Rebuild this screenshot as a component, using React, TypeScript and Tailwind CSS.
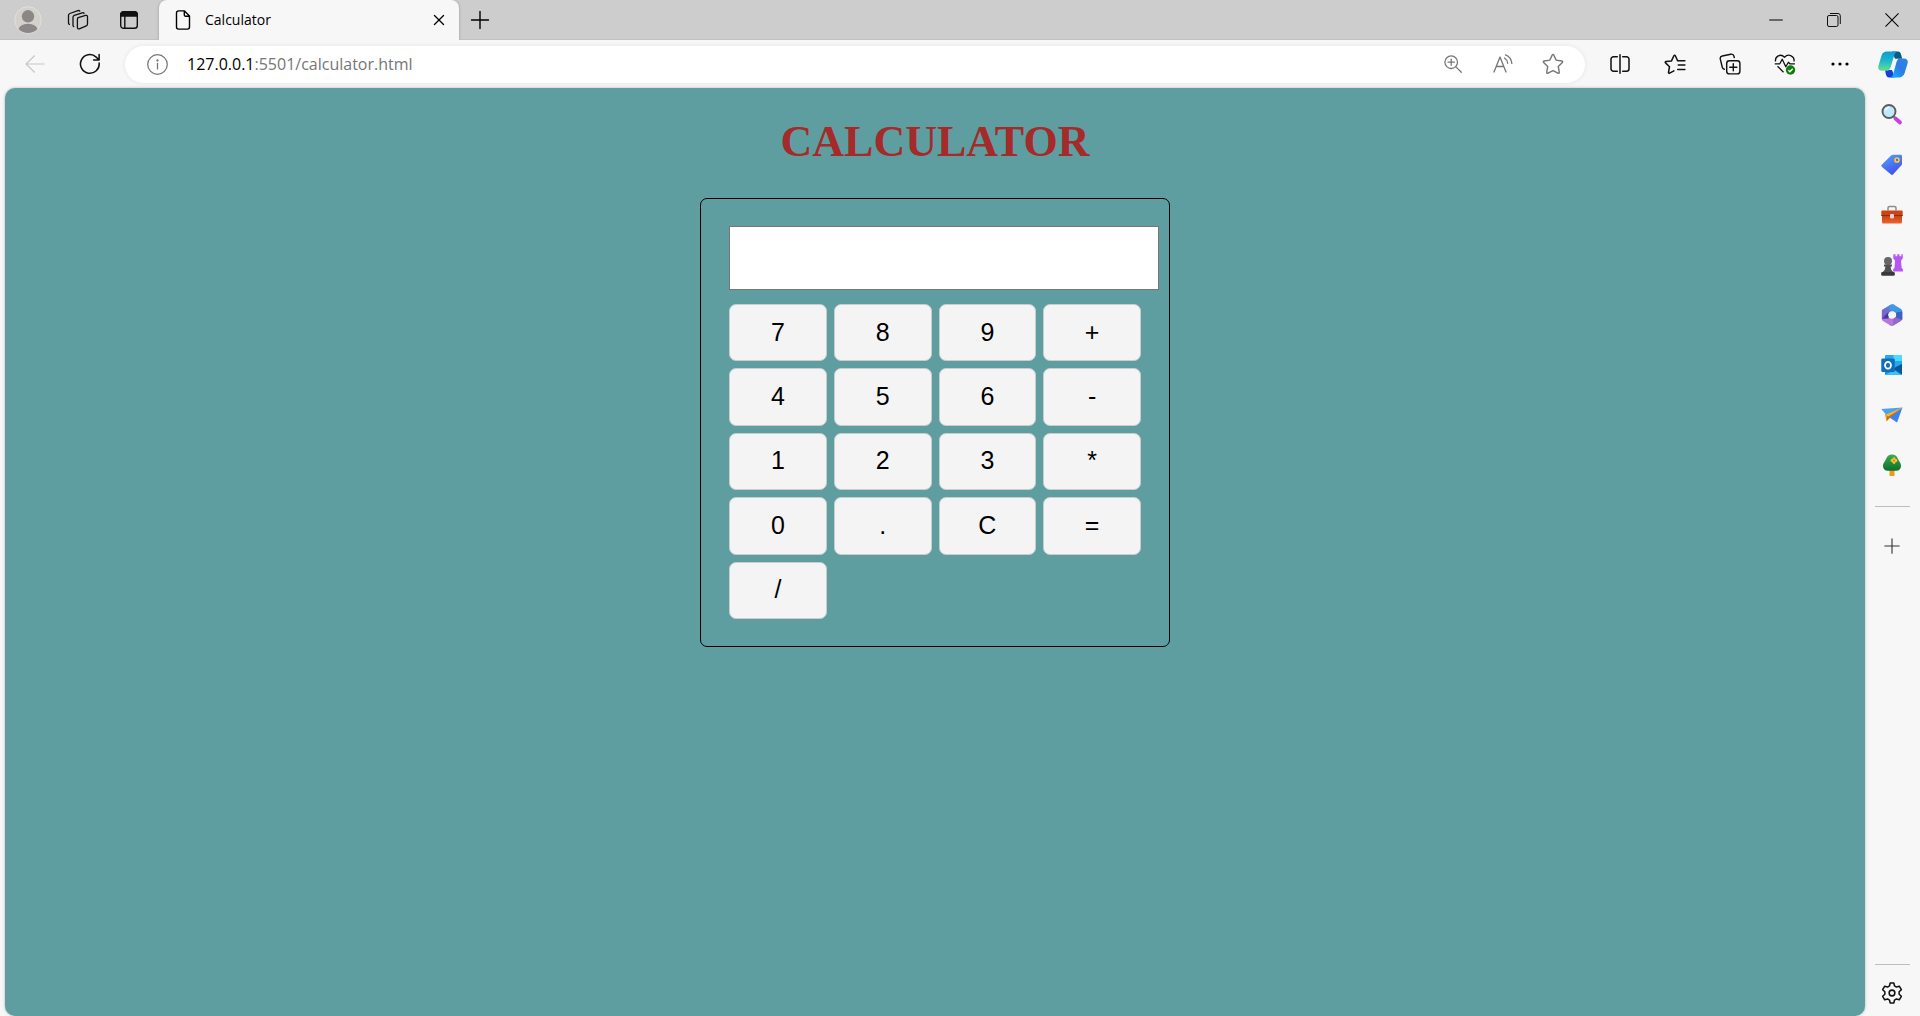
import { useState } from "react";
import type { ReactNode } from "react";

const keys = ["7", "8", "9", "+", "4", "5", "6", "-", "1", "2", "3", "*", "0", ".", "C", "=", "/"];

type IconProps = { children: ReactNode; className?: string; width?: string };

function Icon({ children, className = "size-5", width = "1.2" }: IconProps) {
  return (
    <svg
      viewBox="0 0 20 20"
      fill="none"
      stroke="currentColor"
      strokeWidth={width}
      strokeLinecap="round"
      strokeLinejoin="round"
      className={className}
      aria-hidden="true"
    >
      {children}
    </svg>
  );
}

type SlotProps = { label: string; className: string; children: ReactNode };

function Slot({ label, className, children }: SlotProps) {
  return (
    <button type="button" aria-label={label} className={`flex shrink-0 items-center justify-center ${className}`}>
      {children}
    </button>
  );
}

function TabStrip() {
  return (
    <header className="flex h-10 bg-[#cdcdcd] pl-0.5 text-black shadow-[inset_0_-1px_0_#c2c2c2]">
      <Slot label="Profile" className="w-[51px]">
        <svg viewBox="0 0 28 28" className="size-7" aria-hidden="true">
          <defs>
            <clipPath id="avatar">
              <circle cx="14" cy="14" r="13" />
            </clipPath>
          </defs>
          <circle cx="14" cy="14" r="13.3" fill="#d4d1cd" stroke="#e1dfdd" />
          <g clipPath="url(#avatar)" fill="#8a8886">
            <circle cx="14" cy="10.3" r="6.2" />
            <ellipse cx="14" cy="25" rx="10" ry="7.3" />
          </g>
        </svg>
      </Slot>
      <Slot label="Workspaces" className="w-[50px]">
        <svg viewBox="0 0 22 22" className="size-[22px]" fill="none" stroke="#111" strokeWidth="1.3" strokeLinecap="round" strokeLinejoin="round" aria-hidden="true">
          <path d="M11.200 8.600l7.400-2.200c1-.3 1.900.3 1.900 1.300v7.400c0 .8-.5 1.500-1.200 1.800l-7 2.900c-1 .4-1.900-.2-1.900-1.200v-8.300c0-.8.2-1.400.8-1.700z" />
          <path d="M6.800 17.600c-.5-.2-.8-.7-.8-1.300V8.200c0-.9.5-1.500 1.300-1.800l8-2.600c.8-.2 1.500 0 1.800.5" />
          <path d="M2.400 15.400c-.5-.2-.9-.7-.9-1.400V6.300c0-.9.5-1.500 1.300-1.800l8.100-2.900c.8-.2 1.500 0 1.900.5" />
        </svg>
      </Slot>
      <Slot label="Tab actions menu" className="w-[52px]">
        <svg viewBox="0 0 20 20" className="size-5" fill="none" stroke="#111" strokeWidth="1.4" aria-hidden="true">
          <rect x="1.7" y="2" width="16.6" height="16.3" rx="2.8" />
          <path d="M1.700 6V4.500A2.800 2.800 0 0 1 4.500 1.700h11a2.800 2.800 0 0 1 2.800 2.800V6z" fill="#111" />
          <path d="M5.800 6v12" />
        </svg>
      </Slot>
      <div className="ml-1 flex w-[300px] items-center rounded-t-lg bg-[#f7f7f7] pr-2.5 pl-3.5 shadow-[-1px_0_2px_#b4b4b4,1px_0_2px_#b4b4b4]">
        <Icon className="size-5" width="1.4">
          <path d="M5.500 .9h6l5 5v11.200a2 2 0 0 1-2 2h-9a2 2 0 0 1-2-2V2.900a2 2 0 0 1 2-2zM11.300 1v4.100c0 .7.4 1.100 1.100 1.100h4" />
        </Icon>
        <span className="ml-3 flex-1 text-sm leading-5">Calculator</span>
        <Slot label="Close tab" className="size-5">
          <Icon className="size-3.5" width="1.800">
            <path d="M3.500 3.500l13 13M16.500 3.500l-13 13" />
          </Icon>
        </Slot>
      </div>
      <Slot label="New tab" className="ml-px w-10">
        <Icon className="size-5" width="1.400">
          <path d="M1.500 10h17M10 1.500v17" />
        </Icon>
      </Slot>
      <div className="ml-auto flex">
        <Slot label="Minimize" className="w-[58px]">
          <Icon className="size-3.5" width="1.600">
            <path d="M1 10h18" />
          </Icon>
        </Slot>
        <Slot label="Restore" className="w-[58px]">
          <svg viewBox="0 0 14 14" className="size-3.5" fill="none" stroke="#111" aria-hidden="true">
            <rect x=".5" y="2.500" width="10.500" height="11" rx="1.500" />
            <path d="M3 .5h8a2.300 2.300 0 0 1 2.300 2.300V11" />
          </svg>
        </Slot>
        <Slot label="Close" className="w-[57px]">
          <Icon className="size-3.5" width="1.500">
            <path d="M1 1l18 18M19 1L1 19" />
          </Icon>
        </Slot>
      </div>
    </header>
  );
}

function Copilot() {
  return (
    <svg viewBox="0 0 30 27" className="h-[27px] w-[30px]" aria-hidden="true">
      <defs>
        <linearGradient id="cpA" x1="0" y1="0" x2="0" y2="1">
          <stop offset="0" stopColor="#1099d8" />
          <stop offset=".5" stopColor="#20b8c8" />
          <stop offset="1" stopColor="#66e08c" />
        </linearGradient>
        <linearGradient id="cpB" x1="1" y1="0" x2="0" y2="1">
          <stop offset="0" stopColor="#2f86dc" />
          <stop offset=".5" stopColor="#2c7ce8" />
          <stop offset="1" stopColor="#10b8f8" />
        </linearGradient>
      </defs>
      <path d="M14 .5h6c2 0 2.600 1.500 3.200 3.500l1 3.700H17z" fill="#0b5a86" />
      <path d="M7 19h7l3 7.500h-6c-2 0-2.600-1.500-3.100-3.300z" fill="#1840d8" />
      <path d="M9 .5h10.500c-2 .3-2.800 2.300-3.400 4.300l-3.500 11.700c-.7 2-1.600 3.200-3.600 3.200H4C1 19.700-.3 17.800.4 15L3.500 4.500C4.300 2 6.500.5 9 .5z" fill="url(#cpA)" />
      <path d="M21 26.500H12.500c1.700-.4 2.300-2.300 2.900-4.300l3.200-11.400c.6-2 1.500-3.300 3.500-3.300H26c3 0 4.300 1.900 3.600 4.700L26.500 22.600c-.8 2.400-3 3.900-5.500 3.900z" fill="url(#cpB)" />
    </svg>
  );
}

function Toolbar() {
  return (
    <div className="flex h-12 items-center bg-[#f7f7f7] pl-[7px] text-[#111]">
      <Slot label="Back" className="w-[55px] text-[#c8c8c8]">
        <Icon className="size-5">
          <path d="M19.200 10H1M9.500 1.800L1 10l8.500 8.200" />
        </Icon>
      </Slot>
      <Slot label="Refresh" className="w-[55px]">
        <Icon className="size-[22px]" width="1.400">
          <path d="M18.300 9a8.500 8.500 0 1 1-2.700-5.300l2.300 2.200M18.300 1.300v5h-5" />
        </Icon>
      </Slot>
      <div className="ml-2 flex h-[37px] flex-1 items-center rounded-full bg-white pr-[7px] pl-[22px] text-[#767676] shadow-[0_0_4px_#e4e4e4]">
        <Icon className="size-[21px] shrink-0">
          <circle cx="10" cy="10" r="9.300" />
          <path d="M10 9v5.200" />
          <circle cx="10" cy="6.200" r=".5" fill="currentColor" />
        </Icon>
        <a href="#calculator" className="ml-[19px] flex-1 text-base leading-6">
          <span className="text-black">127.0.0.1</span>:5501/calculator.html
        </a>
        <Slot label="Zoom" className="w-[50px]">
          <Icon className="size-[18px]" width="1.400">
            <circle cx="8" cy="8" r="7" />
            <path d="M13.200 13.200l6 6M4.500 8h7M8 4.500v7" />
          </Icon>
        </Slot>
        <Slot label="Read aloud" className="w-[50px]">
          <Icon className="size-5" width="1.300">
            <path d="M1 18l6-15 6 15M3.200 12.500h7.600M11.500 4c2 1.300 3 3 3.200 5.300M12.500 .8c3.800 1.500 6 4.600 6.300 8.600" />
          </Icon>
        </Slot>
        <Slot label="Add to favorites" className="w-[50px]">
          <Icon className="size-[22px]" width="1.300">
            <path d="M9.300 1.800c.3-.6 1.100-.6 1.400 0l2.200 4.700 5.100.7c.7.100 1 .9.500 1.400l-3.700 3.700.9 5.200c.1.700-.6 1.200-1.200.9L10 16l-4.500 2.400c-.6.3-1.300-.2-1.200-.9l.9-5.200-3.700-3.700c-.5-.5-.2-1.300.5-1.400l5.100-.7z" />
          </Icon>
        </Slot>
      </div>
      <div className="ml-[7px] flex">
        <Slot label="Split screen" className="w-[55px]">
          <Icon className="size-5" width="1.500">
            <path d="M7.300 2.700H3.500a2.500 2.500 0 0 0-2.500 2.500v9.600a2.500 2.500 0 0 0 2.500 2.500h3.800M12.700 2.700h3.800a2.500 2.500 0 0 1 2.500 2.500v9.600a2.500 2.500 0 0 1-2.500 2.500h-3.800M10 .8v18.400" />
          </Icon>
        </Slot>
        <Slot label="Favorites" className="w-[55px]">
          <Icon className="size-[22px]" width="1.400">
            <path d="M12.200 7h6.800M13 11h6M12.500 15H19M6.800 7.200L1.800 7.800c-.6.100-.9.800-.4 1.200l3.600 3.500-.9 5.100c-.1.600.5 1 1 .7L9 16.200M6.800 7.200L9 2.500c.3-.6 1-.6 1.300 0l2 4.300" />
          </Icon>
        </Slot>
        <Slot label="Collections" className="w-[55px]">
          <Icon className="size-[22px]" width="1.300">
            <rect x="7" y="7" width="12" height="12" rx="2.500" />
            <path d="M13 9.800v6.400M9.800 13h6.400M4.800 14.800c-1-.2-1.600-.8-1.800-1.700L1.200 5.600C.9 4.200 1.700 3 3 2.700l7.700-1.600c1.400-.3 2.600.5 2.900 1.800l.3 1.200" />
          </Icon>
        </Slot>
        <Slot label="Browser essentials" className="w-[55px]">
          <svg viewBox="0 0 22 22" className="size-[22px]" fill="none" stroke="#111" strokeWidth="1.300" strokeLinejoin="round" aria-hidden="true">
            <path d="M1.500 8.500C.8 3.500 6.500 0 10.500 4.200 14.500 0 20.900 3.200 20 8.500" />
            <path d="M.8 10.800h5l2.400-4.500 3.600 7.500 2.600-4.600 1.500 1.600h5" />
            <path d="M3.500 13.200l6 6" />
            <circle cx="16.500" cy="17" r="4.700" fill="#107c10" stroke="none" />
            <path d="M14.400 17.200l1.500 1.500 2.800-3" stroke="#fff" />
          </svg>
        </Slot>
        <Slot label="Settings and more" className="w-[55px]">
          <svg viewBox="0 0 18 4" className="h-1 w-[18px]" aria-hidden="true">
            <circle cx="2" cy="2" r="1.600" />
            <circle cx="9" cy="2" r="1.600" />
            <circle cx="16" cy="2" r="1.600" />
          </svg>
        </Slot>
        <Slot label="Copilot" className="w-[53px] pr-0.5">
          <Copilot />
        </Slot>
      </div>
    </div>
  );
}

const apps: { label: string; art: ReactNode }[] = [
  {
    label: "Search",
    art: (
      <>
        <path d="M14.500 14.500l4.500 4" stroke="#c63df0" strokeWidth="3.800" strokeLinecap="round" />
        <path d="M12 12l2.200 2" stroke="#777" strokeWidth="2.200" />
        <circle cx="8" cy="7.500" r="6.500" fill="#c0e8fc" stroke="#5c5c5c" strokeWidth="1.900" />
        <path d="M4.500 6.500a4 4 0 0 1 3.500-3" stroke="#eefaff" strokeWidth="1.500" fill="none" />
      </>
    ),
  },
  {
    label: "Shopping",
    art: (
      <>
        <path d="M12 .8h7.500c1 0 1.500.5 1.500 1.500v7.500c0 .8-.2 1.200-.8 1.800l-8 8.700c-.8.8-1.600.8-2.400 0L1 13c-.8-.8-.8-1.600 0-2.400l9-9.100c.6-.5 1.100-.7 2-.7z" fill="url(#tag)" />
        <circle cx="16" cy="6" r="2" fill="#3c6cf0" stroke="#ffc83d" strokeWidth="1.700" />
      </>
    ),
  },
  {
    label: "Tools",
    art: (
      <>
        <path d="M7 6.500V4c0-1 .5-1.500 1.500-1.500h5c1 0 1.500.5 1.500 1.500v2.500" stroke="#8c8c8c" strokeWidth="1.500" fill="none" />
        <path d="M1 11h20v7c0 1-.6 1.500-1.500 1.500h-17C1.500 19.500 1 19 1 18z" fill="url(#box)" />
        <path d="M1.600 6.500h18.800c.8 0 1.300.5 1.300 1.200v4.100H.3V7.700c0-.7.500-1.200 1.300-1.200z" fill="#cc4412" />
        <path d="M.3 11.500h21.400" stroke="#8c2c10" />
        <rect x="9" y="10" width="4" height="4.500" rx="1" fill="#d4d4d4" />
      </>
    ),
  },
  {
    label: "Games",
    art: (
      <>
        <path d="M12.500 .3h2v2h1.800v-2h2.200v2h1.800v-2h1.500v4l-1.800 2.400.6 7 1.300 1.500v2.300h-9.700v-2.300l1.300-1.500.6-7-1.900-2.400z" fill="#b458f4" />
        <circle cx="7" cy="7" r="4" fill="#676767" />
        <path d="M3 10.500h8v1.900H9.700c0 2.500.8 4.200 2.700 5.700H1.600c1.900-1.500 2.700-3.200 2.700-5.700H3z" fill="#515151" />
        <rect x=".2" y="18" width="13.600" height="3.700" rx="1.200" fill="#3a3a3a" />
      </>
    ),
  },
  {
    label: "Microsoft 365",
    art: (
      <>
        <path d="M9.500 .8L2 5.200C1.300 5.600.8 6.400.8 7.200V15l6.500-2.500V9l6-2.500V.5z" fill="url(#m365a)" />
        <path d="M11 .3c.8 0 1.400.2 2 .5l7 4.200c.8.5 1.200 1.200 1.200 2.100v8.200l-6-3V9L8.500 6V1.300z" fill="#3d98e6" />
        <path d="M21.200 8v7c0 .8-.4 1.500-1.200 2l-7 4.200c-1.400.8-2.600.8-4 0L5.500 17.500l10-5V9z" fill="#9468cc" />
        <path d="M.8 14.500c0 1 .4 1.900 1.200 2.400l7 4.300c1 .5 2 .6 3 .4V14.500L8 14 7 9.500z" fill="#b57ad8" />
        <path d="M15.200 8.500v5l6 2.500V7.500z" fill="#3c62c0" />
        <path d="M.8 14.800L7.500 8v6.500z" fill="#44389c" />
        <path d="M9.200 7.500h3.600l2.200 3.500-2.200 3.500H9.200L7 11z" fill="#f7f7f7" />
      </>
    ),
  },
  {
    label: "Outlook",
    art: (
      <>
        <rect x="4" y="1" width="17" height="12" rx="1" fill="#28a8ea" />
        <path d="M12.500 1H20c.6 0 1 .4 1 1v5h-8.500z" fill="#50d9ff" />
        <path d="M4 7h8.500v7H4z" fill="#0b68b8" />
        <path d="M4 11l8 3.500 9-4.500v10c0 .6-.4 1-1 1H5c-.6 0-1-.4-1-1z" fill="#1490df" />
        <path d="M21 10v10.500L12 14.500z" fill="#0a5796" />
        <path d="M4 21l9-5 7.500 5z" fill="#40c0f4" />
        <rect x=".3" y="4.500" width="13.500" height="13.500" rx="1.300" fill="#0f6cc0" />
        <ellipse cx="7" cy="11.200" rx="3" ry="3.400" fill="none" stroke="#fff" strokeWidth="1.800" />
      </>
    ),
  },
  {
    label: "Drop",
    art: (
      <>
        <path d="M4 10L21.500 3.500l-16 13.500z" fill="#f09a10" />
        <path d="M8.500 13.500L21.500 3.500l-5.500 15z" fill="#3c80f2" />
        <path d="M5.500 17.500l.7-5L21.500 3.500 8.500 13.500z" fill="#c66c08" />
        <path d="M4.500 10.500L21.500 3.500 7.500 12.500z" fill="#ffb524" />
        <path d="M.3 5L21.500 3.500 5 10.500z" fill="#46a4f0" />
      </>
    ),
  },
  {
    label: "E-tree",
    art: (
      <>
        <path d="M8.500 15h5v6c0 .8-.4 1-1 1h-3c-.6 0-1-.2-1-1z" fill="#f09818" />
        <path d="M11 .5c3 0 4.500 1.500 5.500 3.500.6 1.400 1.500 2.500 2.200 4 1 1.400 1.300 2.600 1.300 4 0 3-2 4.800-5 4.800H7c-3 0-5-1.800-5-4.800 0-1.600.5-2.800 1.400-4C4.300 6.500 4.800 5.400 5.500 4 6.500 2 8 .5 11 .5z" fill="url(#tree)" />
        <path d="M13 3.200c1 0 1.700.8 1.500 1.800 1-.2 1.900.5 1.900 1.500s-.9 1.700-1.900 1.500c.2 1-.5 1.900-1.500 1.900S11.300 9 11.500 8c-1 .2-1.900-.5-1.900-1.500S10.500 4.800 11.500 5c-.2-1 .5-1.800 1.500-1.800z" fill="#ffc02e" />
        <circle cx="13" cy="6.500" r="1" fill="#e07818" />
      </>
    ),
  },
];

function Sidebar() {
  return (
    <aside className="flex w-[55px] shrink-0 flex-col items-center pr-px">
      <svg className="absolute size-0" aria-hidden="true">
        <defs>
          <linearGradient id="tag" x1="0" y1="0" x2=".5" y2="1">
            <stop offset="0" stopColor="#58a4f8" />
            <stop offset="1" stopColor="#4053f0" />
          </linearGradient>
          <linearGradient id="box" x1="0" y1="0" x2="0" y2="1">
            <stop offset="0" stopColor="#c83c10" />
            <stop offset="1" stopColor="#ec6430" />
          </linearGradient>
          <linearGradient id="m365a" x1="0" y1="1" x2="1" y2="0">
            <stop offset="0" stopColor="#8c58cc" />
            <stop offset="1" stopColor="#4c8ad8" />
          </linearGradient>
          <linearGradient id="tree" x1="0" y1="0" x2="0" y2="1">
            <stop offset="0" stopColor="#36b050" />
            <stop offset="1" stopColor="#0e6c2c" />
          </linearGradient>
        </defs>
      </svg>
      <div className="flex flex-col pt-0.5">
        {apps.map((app) => (
          <Slot key={app.label} label={app.label} className="h-[50px] w-[54px]">
            <svg viewBox="0 0 22 22" className="size-[22px]" aria-hidden="true">
              {app.art}
            </svg>
          </Slot>
        ))}
      </div>
      <hr className="mt-4 w-[35px] border-[#bdbdbd]" />
      <Slot label="Customize sidebar" className="mt-3.5 h-[50px] w-[54px] text-[#333]">
        <Icon className="size-4" width="1.400">
          <path d="M1 10h18M10 1v18" />
        </Icon>
      </Slot>
      <hr className="mt-auto w-[35px] border-[#bdbdbd]" />
      <Slot label="Sidebar settings" className="h-[51px] w-[54px] pt-1 text-[#111]">
        <Icon className="size-[22px]" width="1.400">
          <path d="M8.300 1h3.400l.6 2.600 1.700 1 2.600-.8 1.900 3.200-2 1.900v2.200l2 1.900-1.900 3.200-2.600-.8-1.700 1-.6 2.600H8.300l-.6-2.600-1.700-1-2.600.8L1.500 13l2-1.900V8.900L1.500 7l1.900-3.200 2.600.8 1.700-1z" />
          <circle cx="10" cy="10" r="2.600" />
        </Icon>
      </Slot>
    </aside>
  );
}

function Calculator() {
  const [display, setDisplay] = useState("");

  const press = (key: string) => {
    if (key === "C") return setDisplay("");
    if (key !== "=") return setDisplay(display + key);
    try {
      setDisplay(String(Function(`return (${display})`)()));
    } catch {
      setDisplay("Error");
    }
  };

  return (
    <main className="ml-[5px] flex flex-1 flex-col items-center rounded-[10px] bg-[#5f9ea0] shadow-[0_0_3px_#b0b0b0]">
      <h1 className="mt-7 font-['Liberation_Serif',serif] text-[44px] leading-[52px] font-bold text-[#a52a2a]">
        CALCULATOR
      </h1>
      <div className="mt-[30px] w-[470px] rounded-[7px] border border-black px-7 py-[27px] font-['Liberation_Sans',sans-serif]">
        <input
          type="text"
          aria-label="Result"
          readOnly
          value={display}
          className="block h-16 w-[430px] border border-[#767676] bg-white px-3.5 text-right text-[25px] text-black outline-none"
        />
        <div className="mt-3.5 grid h-[315px] grid-cols-4 grid-rows-5 gap-[7px]">
          {keys.map((key) => (
            <button
              key={key}
              type="button"
              onClick={() => press(key)}
              className="rounded-[7px] border border-[#cccccc] bg-[#f4f4f4] pb-0.5 text-[25px] leading-7 text-black"
            >
              {key}
            </button>
          ))}
        </div>
      </div>
    </main>
  );
}

export default function App() {
  return (
    <div className="flex min-h-screen flex-col bg-[#f7f7f7] font-['Open_Sans',sans-serif]">
      <TabStrip />
      <Toolbar />
      <div className="flex flex-1">
        <Calculator />
        <Sidebar />
      </div>
    </div>
  );
}
